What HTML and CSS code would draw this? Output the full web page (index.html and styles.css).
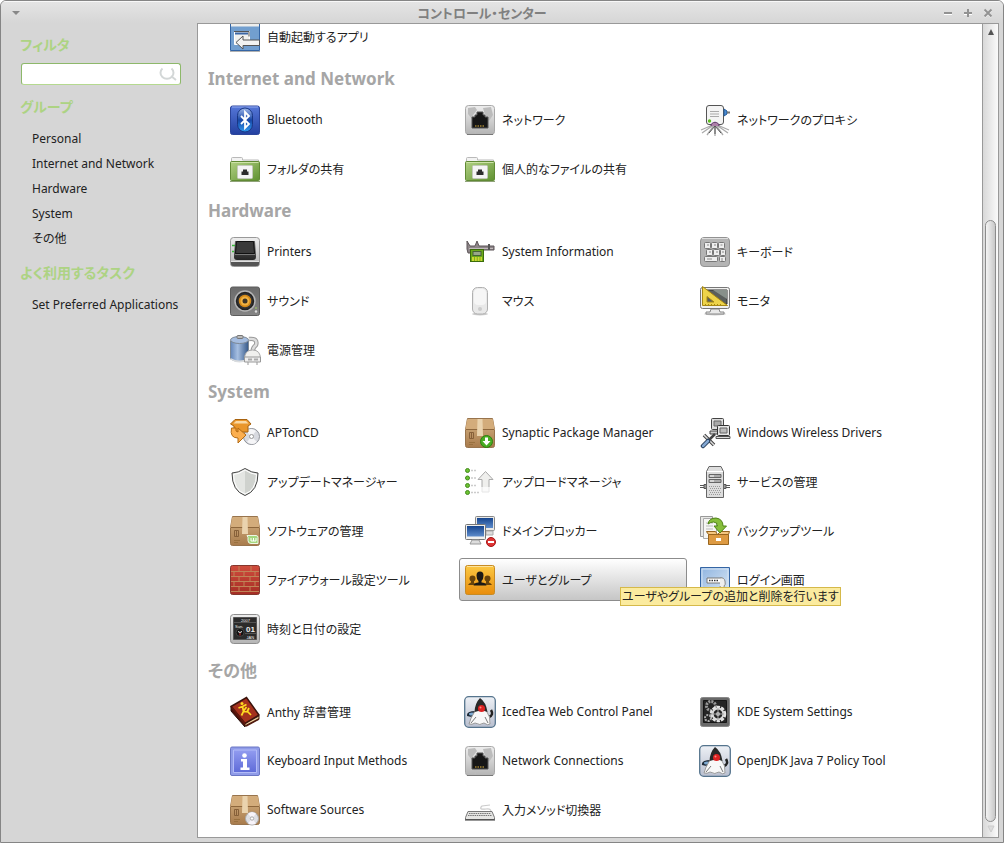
FILE: index.html
```html
<!DOCTYPE html>
<html lang="ja">
<head>
  <meta charset="UTF-8" />
  <meta name="viewport" content="width=device-width, initial-scale=1.0"/>
  <title>コントロール・センター</title>
  <link rel="stylesheet" href="styles.css">
</head>
<body>

  <!-- shared icons -->
  <svg class="sprite" aria-hidden="true">
    <defs>
      <linearGradient id="gSilver" x1="0" y1="0" x2="0" y2="1"><stop offset="0" stop-color="#eee"/><stop offset="1" stop-color="#b4b4b4"/></linearGradient>
      <linearGradient id="gBlue" x1="0" y1="0" x2="0" y2="1"><stop offset="0" stop-color="#5577d8"/><stop offset="1" stop-color="#2340a0"/></linearGradient>
      <linearGradient id="gPill" x1="0" y1="0" x2="0" y2="1"><stop offset="0" stop-color="#9fb7ea"/><stop offset=".5" stop-color="#1746a6"/><stop offset="1" stop-color="#2f9af0"/></linearGradient>
      <linearGradient id="gGreen" x1="0" y1="0" x2="1" y2="1"><stop offset="0" stop-color="#b2d184"/><stop offset="1" stop-color="#5f9130"/></linearGradient>
      <linearGradient id="gDark" x1="0" y1="0" x2="0" y2="1"><stop offset="0" stop-color="#686868"/><stop offset="1" stop-color="#242424"/></linearGradient>
      <linearGradient id="gGrey" x1="0" y1="0" x2="0" y2="1"><stop offset="0" stop-color="#6b6b6b"/><stop offset="1" stop-color="#858585"/></linearGradient>
      <linearGradient id="gBox" x1="0" y1="0" x2="0" y2="1"><stop offset="0" stop-color="#d6b384"/><stop offset="1" stop-color="#a87b4c"/></linearGradient>
      <linearGradient id="gTank" x1="0" y1="0" x2="1" y2="0"><stop offset="0" stop-color="#6285b9"/><stop offset=".4" stop-color="#a6bfe1"/><stop offset="1" stop-color="#355888"/></linearGradient>
      <linearGradient id="gOrange" x1="0" y1="0" x2="0" y2="1"><stop offset="0" stop-color="#fbc843"/><stop offset="1" stop-color="#e98d0c"/></linearGradient>
      <linearGradient id="gBrick" x1="0" y1="0" x2="0" y2="1"><stop offset="0" stop-color="#d04c3d"/><stop offset="1" stop-color="#a52d24"/></linearGradient>
      <linearGradient id="gScreen" x1="0" y1="0" x2="0" y2="1"><stop offset="0" stop-color="#16458e"/><stop offset="1" stop-color="#5e8ccb"/></linearGradient>
      <linearGradient id="gInfo" x1="0" y1="0" x2="0" y2="1"><stop offset="0" stop-color="#929cf0"/><stop offset="1" stop-color="#5e6bd8"/></linearGradient>
      <linearGradient id="gJava" x1="0" y1="0" x2="0" y2="1"><stop offset="0" stop-color="#edf0f5"/><stop offset="1" stop-color="#b9bfcf"/></linearGradient>
      <linearGradient id="gLogin" x1="0" y1="0" x2="1" y2="1"><stop offset="0" stop-color="#8fb4e0"/><stop offset="1" stop-color="#dbe8f5"/></linearGradient>
    </defs>

    <symbol id="startup" viewBox="0 0 32 32">
      <path d="M1.500 2h29v27.500h-29z" fill="#729fcf" stroke="#3465a4"/>
      <path d="M2 2h28v3.500H2z" fill="#eeeeec"/>
      <path d="M5.500 10.500h15v13h-15z" fill="#f1f1ee" stroke="#fff"/>
      <path d="M6 12.500h13" stroke="#3a67a5" stroke-width="2"/>
      <path d="M5 10.500h15v5" fill="none" stroke="#555"/>
      <path d="M7 21.500l7-6.500v4h16.500v5.500H14v3.500z" fill="#f3f3f1" stroke="#555"/>
      <path d="M1 30.500h30" stroke="#000" opacity=".3"/>
    </symbol>

    <symbol id="bluetooth" viewBox="0 0 32 32">
      <rect x="1.500" y="2" width="29" height="28.500" rx="2" fill="url(#gBlue)" stroke="#2c459b"/>
      <path d="M3 3h26" stroke="#92aaf0"/>
      <rect x="8.500" y="4" width="15" height="24" rx="7.500" fill="url(#gPill)" stroke="#183684"/>
      <path d="M12 12l8 8-4 4V8l4 4-8 8" fill="none" stroke="#fff" stroke-width="1.800"/>
    </symbol>

    <symbol id="network" viewBox="0 0 32 32">
      <rect x="1.500" y="1.500" width="29" height="29" rx="3" fill="url(#gSilver)" stroke="#a9a9a9"/>
      <path d="M4 4l7-1 2 3-4 5-1 4-4-5zM19 4l8-1 2 8-4 6-4-6zM10 24l3 1-2 5z" fill="#bcbcbc"/>
      <path d="M8 24V13h3v-2h2V8h6v3h2v2h3v11z" fill="#161616" stroke="#555"/>
      <path d="M11 22h10" stroke="#7d662a" stroke-width="2" stroke-dasharray="1.500 1"/>
      <path d="M3 30.500h26" stroke="#777"/>
    </symbol>

    <symbol id="proxy" viewBox="0 0 32 32">
      <path d="M16 20L3 29M16 20L8 31M16 20v12M16 20l8 11M16 20l13 9M16 20L2 26M16 20l14 6" stroke="#aaa" stroke-width="1.300"/>
      <rect x="7.500" y="1.500" width="17" height="19" rx="2.500" fill="#f4f4f4" stroke="#555"/>
      <path d="M11 7.500h9M11 10h9M11 12.500h9" stroke="#aaa"/>
      <path d="M25 5l3 2v3l-3 2z" fill="#4a8bd1" stroke="#245a98"/>
      <path d="M28 8.500h3" stroke="#777" stroke-width="2"/>
      <circle cx="10.500" cy="17" r="1.700" fill="#5fc020"/>
      <path d="M12 22c0-5 8-5 8 0" fill="#ad7fa8" stroke="#5c3566"/>
      <path d="M16 22l-6 7M16 22v8M16 22l6 7" stroke="#555"/>
    </symbol>

    <symbol id="share" viewBox="0 0 32 32">
      <path d="M2.500 9V5.500q0-1 1-1h9q1 0 1 1V7h16v3" fill="#f3f3f3" stroke="#b9b9b9"/>
      <rect x="1.500" y="8.500" width="29" height="19" rx="1" fill="url(#gGreen)" stroke="#608a34"/>
      <path d="M2.500 9.500h27" stroke="#cde3a8"/>
      <rect x="8.500" y="12.500" width="15" height="13" rx="1" fill="#f4f4f4" stroke="#c3c9bb"/>
      <path d="M12.500 22v-3.500h1.500v-2h4v2h1.500V22z" fill="#2c2c2c"/>
      <path d="M1 28.500h30" stroke="#45671f" opacity=".6"/>
    </symbol>

    <symbol id="printer" viewBox="0 0 32 32">
      <rect x="1.500" y="1.500" width="29" height="29" rx="3" fill="url(#gSilver)" stroke="#999"/>
      <path d="M2 25h28v3q0 2-2 2H4q-2 0-2-2z" fill="#555"/>
      <path d="M6 5h20l1 16q0 3-3 3H8q-3 0-3-3z" fill="url(#gDark)"/>
      <path d="M7.500 5.500h17l1 12h-19z" fill="#3a3a3a" stroke="#111"/>
      <path d="M6 18.500h20" stroke="#777"/>
      <path d="M3 9.500h3M3 15.500h2" stroke="#3cba3c" stroke-width="1.500"/>
      <path d="M2 25.500h28" stroke="#e1e1e1"/>
    </symbol>

    <symbol id="caliper" viewBox="0 0 32 32">
      <path d="M3 5l3 5h5l2-5 2 5h15v4H17l-3 3v8l-3-6-4-2H4l-1-4z" fill="#8d8588" stroke="#5d5558"/>
      <path d="M5 12.500h24" stroke="#c2bbbd"/>
      <path d="M25 8v6" stroke="#555" stroke-width="2"/>
      <rect x="6.500" y="13.500" width="13" height="12" fill="#6aa81b" stroke="#3b6c0a"/>
      <rect x="9" y="15.500" width="8" height="4" fill="#98a889" stroke="#47603a"/>
      <path d="M8 22h10M8 24h10" stroke="#ece63a" stroke-width="1.500" stroke-dasharray="2 .8"/>
    </symbol>

    <symbol id="keyboard" viewBox="0 0 32 32">
      <rect x="1.500" y="1.500" width="29" height="29" rx="3.500" fill="#b4b4b4" stroke="#929292"/>
      <path d="M3 2.500h26" stroke="#ddd"/>
      <g fill="#eee" stroke="#777">
        <rect x="5.500" y="6.500" width="6" height="6" rx="1"/><rect x="12.500" y="6.500" width="6" height="6" rx="1"/><rect x="19.500" y="6.500" width="6" height="6" rx="1"/>
        <rect x="7.500" y="13.500" width="6" height="6" rx="1"/><rect x="14.500" y="13.500" width="6" height="6" rx="1"/><rect x="21.500" y="13.500" width="5" height="6" rx="1"/>
        <rect x="5.500" y="20.500" width="13" height="5" rx="1"/><rect x="20.500" y="20.500" width="6" height="5" rx="1"/>
      </g>
      <path d="M8 9h2M15 9h2M21.500 9h2M10 16h2M17 16h2M23 16h2M8 23h5M23 22v3" stroke="#888"/>
    </symbol>

    <symbol id="sound" viewBox="0 0 32 32">
      <rect x="1.500" y="2" width="29" height="28.500" rx="2" fill="url(#gGrey)" stroke="#5d5d5d"/>
      <circle cx="16" cy="16" r="10" fill="#222" stroke="#b5b5b5" stroke-width="1.500"/>
      <circle cx="16" cy="16" r="7" fill="#d68b19" stroke="#333" stroke-width="1.500"/>
      <circle cx="16" cy="16" r="4.500" fill="#f1b241"/>
      <circle cx="16" cy="16" r="2.500" fill="#3c3426"/>
      <circle cx="27" cy="23" r=".8" fill="#a6e058"/><circle cx="27" cy="26.500" r="1.200" fill="#ddd"/>
    </symbol>

    <symbol id="mouse" viewBox="0 0 32 32">
      <ellipse cx="16" cy="29" rx="8" ry="1.500" fill="#ccc"/>
      <rect x="8.500" y="2.500" width="15" height="26.500" rx="5" fill="#e9e9e9" stroke="#b0b0b0"/>
      <rect x="10" y="4" width="12" height="16" rx="4" fill="#f6f6f6"/>
      <circle cx="16" cy="24" r="2" fill="#ccc"/>
    </symbol>

    <symbol id="monitor" viewBox="0 0 32 32">
      <ellipse cx="16" cy="29" rx="11" ry="1.500" fill="#ccc"/>
      <path d="M12 24h8l1 3h4v2H7v-2h4z" fill="#e8e8e8" stroke="#888"/>
      <rect x="1.500" y="2.500" width="29" height="21" rx="2" fill="#f0f0ee" stroke="#777"/>
      <path d="M4 5h24v14H4z" fill="#5a5f5c" stroke="#333"/>
      <path d="M14 5h14v9z" fill="#87908a"/>
      <path d="M3.500 1.500v19h25z M8 11.500l7 5.500H8z" fill="#edd34a" fill-rule="evenodd" stroke="#a78812"/>
      <path d="M6 19.500h18" stroke="#a78812" stroke-dasharray="1 2"/>
    </symbol>

    <symbol id="power" viewBox="0 0 32 32">
      <path d="M20 5q9-1 7 6-4 3-3 8" fill="none" stroke="#999" stroke-width="4.500"/>
      <path d="M20 5q9-1 7 6-4 3-3 8" fill="none" stroke="#ddd" stroke-width="2.500"/>
      <path d="M1.500 7v18q9 5 18 0V7z" fill="url(#gTank)" stroke="#7c8895"/>
      <ellipse cx="10.500" cy="6" rx="9" ry="3.500" fill="#a5bde0" stroke="#7c8895"/>
      <rect x="8" y="1.500" width="6" height="3" rx="1" fill="#bbb" stroke="#777"/>
      <path d="M1.500 24v1.500q9 6 18 0V24q-9 5-18 0z" fill="#d9dcdf"/>
      <path d="M15.500 25q0-9 8-9t8 9z" fill="#f0f0ee" stroke="#aaa"/>
      <path d="M15.500 23h16v5h-16zM19 28v3M28 28v3" fill="#eee" stroke="#999"/>
      <path d="M19 25.500h4M25 25.500h4" stroke="#aaa" stroke-width="2"/>
    </symbol>

    <symbol id="aptoncd" viewBox="0 0 32 32">
      <circle cx="22.500" cy="19.500" r="8" fill="#d7d9df" stroke="#8f9299"/>
      <path d="M22.500 19.500L17 14q5-4 10 0zM22.500 19.500L28 25q-5 4-10 0z" fill="#f5f5f7"/>
      <circle cx="22.500" cy="19.500" r="2" fill="#fff" stroke="#999"/>
      <path d="M1.500 7L6 2.500h12L22 7l-3 2v6H5V9z" fill="#e9962c" stroke="#a7620e"/>
      <path d="M4.500 6.500L7 4h10l2.500 2.500z" fill="#fad9a5"/>
      <path d="M2.500 11q-2 10 6.500 10v5l8-8-8-7v4q-3 0-2-4z" fill="#fbae4f" stroke="#b36b14"/>
    </symbol>

    <symbol id="package" viewBox="0 0 32 32">
      <path d="M3.500 1.500h25l2 11v16q0 2-2 2h-25q-2 0-2-2v-16z" fill="url(#gBox)" stroke="#98744d"/>
      <path d="M3 2.500h26l1.500 10h-29z" fill="#d3ac7b"/>
      <path d="M2 12.500h28" stroke="#8e673c"/>
      <path d="M13.500 2h5l.5 17h-6z" fill="#ead3ae"/>
      <path d="M5.500 15.500h4v6h-4zM7.500 16v5" fill="none" stroke="#876039"/>
      <path d="M5 25.500h6M5 27.500h4" stroke="#99713f"/>
    </symbol>

    <symbol id="wireless" viewBox="0 0 32 32">
      <rect x="12.500" y="1.500" width="12" height="11" rx="1" fill="#ddd" stroke="#444"/>
      <path d="M15 4h7v5h-7z" fill="#aaa" stroke="#666"/>
      <path d="M11 14h12v3H11z" fill="#ccc" stroke="#444"/>
      <rect x="18.500" y="8.500" width="12" height="10" rx="1" fill="#e5e5e5" stroke="#333"/>
      <path d="M21 11h7v5h-7z" fill="#bcbcbc" stroke="#666"/>
      <path d="M17 19.500h14v2H17z" fill="#ddd" stroke="#555"/>
      <path d="M5 18l10 10" stroke="#444" stroke-width="3.500"/><path d="M5 18l10 10" stroke="#ddd" stroke-width="1.500"/>
      <path d="M16 17L9 24" stroke="#444" stroke-width="2.500"/>
      <path d="M9 24l-5 5" stroke="#253b57" stroke-width="4.500" stroke-linecap="round"/><path d="M9 24l-5 5" stroke="#83a7d2" stroke-width="2.500" stroke-linecap="round"/>
    </symbol>

    <symbol id="shield" viewBox="0 0 32 32">
      <path d="M16 2.500q7 4.500 13 4.500 0 18-13 22.500Q3 25 3 7q6 0 13-4.500z" fill="#e4e6e3" stroke="#444"/>
      <path d="M16 4q6 4 11.500 4.500Q27 24 16 28z" fill="#cfd2ce"/>
      <path d="M16 4Q10 8 4.500 8.500 5 24 16 28 27 24 27.500 8.500 22 8 16 4z" fill="none" stroke="#fff"/>
    </symbol>

    <symbol id="upload" viewBox="0 0 32 32">
      <path d="M7 4.500h6M7 12h6M7 19.500h6M7 26.500h9" stroke="#ccc" stroke-width="1.500" stroke-dasharray="2 1"/>
      <g fill="#6cc332" stroke="#438b1c"><circle cx="3.500" cy="4.500" r="2"/><circle cx="3.500" cy="12" r="2"/><circle cx="3.500" cy="19.500" r="2"/><circle cx="3.500" cy="26.500" r="2"/></g>
      <path d="M21.500 5.500L29 13.500h-4V26h-7V13.500h-4z" fill="#efefed" stroke="#aaa"/>
      <path d="M15 21h13v7H15z" fill="#fff" opacity=".7"/>
    </symbol>

    <symbol id="service" viewBox="0 0 32 32">
      <path d="M1 19.500h30M1 21.500h30" stroke="#555"/>
      <path d="M5 18.500h22v4H5z" fill="#999" stroke="#555"/>
      <path d="M10 .5h12l2.500 5v26h-17v-26z" fill="#ddd" stroke="#666"/>
      <path d="M8 5.500h16" stroke="#fff"/>
      <path d="M10 8.500h12v3H10zM10 13.500h12v3H10z" fill="#aaa" stroke="#666"/>
      <path d="M11 10h4M11 15h4" stroke="#fff"/>
      <path d="M10 20.500h12M11 22.500h12M10 24.500h12M11 26.500h12M10 28.500h12" stroke="#999" stroke-dasharray="1 1"/>
    </symbol>

    <symbol id="domain" viewBox="0 0 32 32">
      <rect x="11.500" y="1.500" width="19" height="14" rx="1" fill="#e9e9e7" stroke="#888"/>
      <path d="M13 3h16v10H13z" fill="url(#gScreen)"/>
      <path d="M22 16h7v4h-7z" fill="#ddd" stroke="#aaa"/>
      <rect x="1.500" y="9.500" width="20" height="15" rx="1" fill="#f0f0ee" stroke="#777"/>
      <path d="M3 11h17v10.500H3z" fill="url(#gScreen)"/>
      <path d="M8 25h7l2 4H6z" fill="#ddd" stroke="#999"/>
      <circle cx="27" cy="27" r="4.500" fill="#df3434" stroke="#a31515"/>
      <path d="M24 27h6" stroke="#fff" stroke-width="2"/>
    </symbol>

    <symbol id="backup" viewBox="0 0 32 32">
      <path d="M1.500 1.500h12v20h-12z" fill="#e8e8e6" stroke="#999"/>
      <path d="M4.500 3.500h13v20h-13z" fill="#f6f6f4" stroke="#aaa"/>
      <path d="M7 8h7M7 11h7M7 14h7M7 17h5" stroke="#bbb"/>
      <path d="M9.500 19.500h20v10h-20z" fill="#dd9a42" stroke="#98651e"/>
      <path d="M9.500 19.500l-2-3h9l2 3 3-3h9l-1 3z" fill="#f4c681" stroke="#98651e"/>
      <path d="M17 23h5v3h-5z" fill="#fff"/>
      <path d="M9 9q1-6 8-6 7 1 7 8h3.500L21 18l-6-7h3.500q0-4-4-4-3 0-5.500 2z" fill="#86be3c" stroke="#4f8415"/>
    </symbol>

    <symbol id="firewall" viewBox="0 0 32 32">
      <rect x="1.500" y="1.500" width="29" height="29" rx="2" fill="url(#gBrick)" stroke="#84372d"/>
      <path d="M2 7.500h28M2 12.500h28M2 17.500h28M2 22.500h28M2 27.500h28M10 2v5.500M22 2v5.500M5 8v5M15 8v5M26 8v5M10 13v4.500M21 13v4.500M5 18v4.500M15 18v4.500M26 18v4.500M10 23v4.500M21 23v4.500" stroke="#bf8457"/>
    </symbol>

    <symbol id="users" viewBox="0 0 32 32">
      <rect x="1.500" y="1.500" width="29" height="29" rx="2" fill="url(#gOrange)" stroke="#c78b24"/>
      <path d="M3 2.500h26" stroke="#fde29b"/>
      <g fill="#69440b"><circle cx="8.500" cy="14.500" r="3"/><circle cx="23.500" cy="14.500" r="3"/><path d="M4 21q1-2 3-2.500V16h3v3l4 2zM18 21l4-2v-3h3v2.500q2 .5 3 2.500z"/></g>
      <path d="M12.500 11.500q0-4 3.500-4t3.500 4-2 5.500v1.500q4 0 5 3H9.500q1-3 5-3V17q-2-1.500-2-5.500z" fill="#1c1a17"/>
    </symbol>

    <symbol id="login" viewBox="0 0 32 32">
      <path d="M1.500 3.500h29v26h-29z" fill="url(#gLogin)" stroke="#3465a4"/>
      <path d="M3 5h26v23H3z" fill="none" stroke="#d5e4f4"/>
      <path d="M8 14h15v5H8z" fill="#fff" stroke="#777"/>
      <path d="M10 16.500h9" stroke="#333" stroke-width="1.500" stroke-dasharray="1.500 1"/>
      <path d="M21 14q4-1 5 3t-1 5l2 7h-4l-2-7" fill="#eee" stroke="#888"/>
    </symbol>

    <symbol id="clock" viewBox="0 0 32 32">
      <rect x="1.500" y="1.500" width="29" height="29" rx="3" fill="url(#gSilver)" stroke="#8e8e8e"/>
      <path d="M4.500 4.500h23v22h-23z" fill="#2b2b2b" stroke="#555"/>
      <path d="M5 9.500h22M16 20.500h11" stroke="#555"/>
      <circle cx="11" cy="19.500" r="4" fill="#111" stroke="#444"/>
      <path d="M9 18.500l2 1 2-1" stroke="#eee" fill="none"/><path d="M11 20v2.500" stroke="#d33"/>
      <text x="12" y="9" font-size="4">2007</text>
      <text x="6" y="15" font-size="4">Sun.</text>
      <text x="17" y="18.500" font-size="8" font-weight="bold">01</text>
      <text x="17.500" y="25.500" font-size="4">JAN</text>
    </symbol>

    <symbol id="book" viewBox="0 0 32 32">
      <path d="M2 11l14 17v3L2 15z" fill="#4d1009" stroke="#28110d"/>
      <path d="M16 27l14-7v3l-14 7z" fill="#e7c899" stroke="#46200d"/>
      <path d="M2 10.500L17.500 1.500 30 19l-14 8.500z" fill="#a4311d" stroke="#39130c" stroke-width="1.500"/>
      <path d="M3 11.500L16 28" stroke="#5f170d" stroke-width="2"/>
      <circle cx="13" cy="7.500" r="1.500" fill="#ffdc21"/>
      <path d="M9.500 12l4-1.500 4-2M13.500 10.500l1 5-2 4M14.500 15l3-4M15 15.500l4 .5 3 3M18 16l2-4" fill="none" stroke="#ffdc21" stroke-width="1.700"/>
      <path d="M17 30l13-7" stroke="#50190d" stroke-width="1.500"/>
    </symbol>

    <symbol id="java" viewBox="0 0 32 32">
      <rect x=".7" y=".7" width="30.600" height="30.600" rx="4" fill="url(#gJava)" stroke="#55748d" stroke-width="1.300"/>
      <path d="M3 20q-1-5 9-5l-2 6q-4 0-7-1z" fill="#1d2a38"/><ellipse cx="8" cy="18" rx="3" ry="1.500" fill="#7da9d1"/>
      <path d="M25 21q5-2 2-7" fill="none" stroke="#222" stroke-width="2.500"/>
      <path d="M11 15q-5 8-6 13 3 1 6-1 5 3 9 0 4 3 6 1 1-7-4-14z" fill="#f8f8f8" stroke="#999"/>
      <path d="M16 2q6 4 7.500 14-6-3-13 0Q11 7 16 2z" fill="#292929"/>
      <path d="M7 27l5-6M24 27l-3-6" stroke="#777"/>
      <circle cx="17.500" cy="12.500" r="3.500" fill="#dd2222"/><circle cx="16.500" cy="11.500" r="1" fill="#ff8a80"/>
    </symbol>

    <symbol id="kde" viewBox="0 0 32 32">
      <rect x="1.500" y="1.500" width="29" height="29" rx="2" fill="#686868" stroke="#888"/>
      <path d="M4.500 4.500h23v22h-23z" fill="#242424" stroke="#161616"/>
      <circle cx="12" cy="10" r="4.500" fill="none" stroke="#999" stroke-width="3" stroke-dasharray="2 1"/>
      <circle cx="19" cy="18" r="6.500" fill="none" stroke="#e4e4e4" stroke-width="3.500" stroke-dasharray="3 1.100"/>
      <circle cx="19" cy="18" r="5.500" fill="none" stroke="#dadada" stroke-width="2"/>
      <circle cx="19" cy="18" r="2" fill="#ccc"/><path d="M19 12v12M13 18h12" stroke="#aaa"/>
      <circle cx="9" cy="22" r="3" fill="none" stroke="#aaa" stroke-width="2" stroke-dasharray="2 1"/>
    </symbol>

    <symbol id="info" viewBox="0 0 32 32">
      <rect x="1.500" y="2" width="29" height="28.500" rx="1.500" fill="#8f9be8" stroke="#6a76c4"/>
      <path d="M4.500 5h23v22.500h-23z" fill="url(#gInfo)" stroke="#b2bbf7"/>
      <circle cx="15.500" cy="10.500" r="2.300" fill="#fff"/>
      <path d="M12 14h6v8.500h2.500V25h-9v-2.500H14v-6h-2z" fill="#fff"/>
    </symbol>

    <symbol id="disc" viewBox="0 0 32 32">
      <circle cx="23" cy="24.500" r="6.500" fill="#dedfe4" stroke="#aaa"/>
      <path d="M23 24.500l-4-5q4-3 8 0zM23 24.500l4 5q-4 2-8 0z" fill="#f8f4fa"/>
      <circle cx="23" cy="24.500" r="1.700" fill="#fff" stroke="#aaa"/>
    </symbol>

    <symbol id="ime" viewBox="0 0 32 32">
      <path d="M27 18q0-4-5-3-8 1-4-3l8-1" fill="none" stroke="#ccc" stroke-width="1.200"/>
      <path d="M4 17.500h24l2.500 6v2h-29v-2z" fill="#e5e5e3" stroke="#777"/>
      <path d="M5 19.500h22M4 21.500h24" stroke="#777" stroke-dasharray="1.500 .7"/>
      <path d="M1 26h30" stroke="#333"/>
    </symbol>
  </svg>

  <div class="window">
    <header class="titlebar">
      <button class="win-btn" aria-label="メニュー"><svg width="10" height="10" viewBox="0 0 10 10"><path d="M1 3h8L5 7z" fill="#888"/></svg></button>
      <h1>コントロール・センター</h1>
      <div class="win-controls">
        <button class="win-btn" aria-label="最小化"><svg width="10" height="10" viewBox="0 0 10 10"><path d="M1 6.500h8" stroke="#fff"/><path d="M1 5h8" stroke="#929292" stroke-width="2"/></svg></button>
        <button class="win-btn" aria-label="最大化"><svg width="10" height="10" viewBox="0 0 10 10"><path d="M1 6.500h8" stroke="#fff"/><path d="M1 5h8M5 1v8" stroke="#929292" stroke-width="2"/></svg></button>
        <button class="win-btn" aria-label="閉じる"><svg width="10" height="10" viewBox="0 0 10 10"><path d="M1.500 2l7 7M8.500 2l-7 7" stroke="#fff" stroke-width="2"/><path d="M1.500 1.500l7 7M8.500 1.500l-7 7" stroke="#929292" stroke-width="2"/></svg></button>
      </div>
    </header>

    <div class="body">
      <aside class="sidebar">
        <h2><label for="filter">フィルタ</label></h2>
        <div class="search">
          <input type="text" id="filter" />
          <svg width="20" height="18" viewBox="0 0 20 18"><path d="M4.500 3.500a6.500 6 0 1 0 9 0M13 11l5 4" fill="none" stroke="#d3d7d7" stroke-width="2"/></svg>
        </div>
        <h2>グループ</h2>
        <nav>
          <a href="#personal">Personal</a>
          <a href="#internet">Internet and Network</a>
          <a href="#hardware">Hardware</a>
          <a href="#system">System</a>
          <a href="#other">その他</a>
        </nav>
        <h2>よく利用するタスク</h2>
        <nav>
          <a href="#preferred">Set Preferred Applications</a>
        </nav>
      </aside>

      <main class="content">
        <div class="groups">
          <section class="grid" id="personal">
            <button class="item"><svg><use href="#startup"/></svg>自動起動するアプリ</button>
          </section>

          <h2 id="internet">Internet and Network</h2>
          <section class="grid">
            <button class="item"><svg><use href="#bluetooth"/></svg>Bluetooth</button>
            <button class="item"><svg><use href="#network"/></svg>ネットワーク</button>
            <button class="item"><svg><use href="#proxy"/></svg>ネットワークのプロキシ</button>
            <button class="item"><svg><use href="#share"/></svg>フォルダの共有</button>
            <button class="item"><svg><use href="#share"/></svg>個人的なファイルの共有</button>
          </section>

          <h2 id="hardware">Hardware</h2>
          <section class="grid">
            <button class="item"><svg><use href="#printer"/></svg>Printers</button>
            <button class="item"><svg><use href="#caliper"/></svg>System Information</button>
            <button class="item"><svg><use href="#keyboard"/></svg>キーボード</button>
            <button class="item"><svg><use href="#sound"/></svg>サウンド</button>
            <button class="item"><svg><use href="#mouse"/></svg>マウス</button>
            <button class="item"><svg><use href="#monitor"/></svg>モニタ</button>
            <button class="item"><svg><use href="#power"/></svg>電源管理</button>
          </section>

          <h2 id="system">System</h2>
          <section class="grid">
            <button class="item"><svg><use href="#aptoncd"/></svg>APTonCD</button>
            <button class="item"><svg viewBox="0 0 32 32"><use href="#package"/><circle cx="22.500" cy="24.500" r="6" fill="#48ad22" stroke="#2c8110"/><path d="M21 20.500h3V24h2.500l-4 4.500-4-4.500H21z" fill="#fff"/></svg>Synaptic Package Manager</button>
            <button class="item"><svg><use href="#wireless"/></svg>Windows Wireless Drivers</button>
            <button class="item"><svg><use href="#shield"/></svg>アップデートマネージャー</button>
            <button class="item"><svg><use href="#upload"/></svg>アップロードマネージャ</button>
            <button class="item"><svg><use href="#service"/></svg>サービスの管理</button>
            <button class="item"><svg viewBox="0 0 32 32"><use href="#package"/><path d="M18 20.500h9q2 0 2 2v6h-7q-3 0-3-3v-3z" fill="#a5d77e" stroke="#eef8e5"/><path d="M22 23v3h5v-3M24.500 23v3" fill="none" stroke="#fff"/></svg>ソフトウェアの管理</button>
            <button class="item"><svg><use href="#domain"/></svg>ドメインブロッカー</button>
            <button class="item"><svg><use href="#backup"/></svg>バックアップツール</button>
            <button class="item"><svg><use href="#firewall"/></svg>ファイアウォール設定ツール</button>
            <button class="item active" aria-describedby="tip"><svg><use href="#users"/></svg>ユーザとグループ<span class="tooltip" role="tooltip" id="tip">ユーザやグループの追加と削除を行います</span></button>
            <button class="item"><svg><use href="#login"/></svg>ログイン画面</button>
            <button class="item"><svg><use href="#clock"/></svg>時刻と日付の設定</button>
          </section>

          <h2 id="other">その他</h2>
          <section class="grid">
            <button class="item"><svg><use href="#book"/></svg>Anthy 辞書管理</button>
            <button class="item"><svg><use href="#java"/></svg>IcedTea Web Control Panel</button>
            <button class="item"><svg><use href="#kde"/></svg>KDE System Settings</button>
            <button class="item"><svg><use href="#info"/></svg>Keyboard Input Methods</button>
            <button class="item"><svg><use href="#network"/></svg>Network Connections</button>
            <button class="item"><svg><use href="#java"/></svg>OpenJDK Java 7 Policy Tool</button>
            <button class="item"><svg viewBox="0 0 32 32"><use href="#package"/><use href="#disc"/></svg>Software Sources</button>
            <button class="item"><svg><use href="#ime"/></svg>入力メソッド切換器</button>
          </section>
        </div>

        <div class="scrollbar">
          <svg width="8" height="8" viewBox="0 0 8 8"><path d="M1 7h6L4 1z" fill="#555"/></svg>
          <div class="track"><div class="thumb"></div></div>
          <svg width="8" height="8" viewBox="0 0 8 8"><path d="M1 1h6L4 7z" fill="#ddd" stroke="#ccc"/></svg>
        </div>
      </main>
    </div>
  </div>

</body>
</html>
```
FILE: styles.css
```css
* {
  box-sizing: border-box;
}

body {
  margin: 0;
  height: 100vh;
  overflow: hidden;
  font-family: "Noto Sans", "Noto Sans CJK JP", sans-serif;
  font-size: 12px;
  font-feature-settings: "palt";
  color: #222;
  background: #fff;
}

.sprite {
  position: absolute;
  width: 0;
  height: 0;
}

symbol text {
  font-family: "Liberation Sans", sans-serif;
  fill: #eee;
}

.window {
  display: flex;
  flex-direction: column;
  height: 100%;
  border: 1px solid #858585;
  border-radius: 6px 6px 0 0;
  background: #d6d6d6;
  overflow: hidden;
}

.titlebar {
  display: flex;
  align-items: center;
  flex: none;
  height: 22px;
  padding: 0 10px;
  border-top: 1px solid #f8f8f8;
  background: linear-gradient(#e4e4e4, #d6d6d6);
}

.titlebar h1 {
  flex: 1;
  margin: 0;
  font-size: 13px;
  line-height: 20px;
  text-align: center;
  color: #808080;
}

.win-btn {
  display: flex;
  padding: 0;
  border: none;
  background: none;
}

.win-controls {
  display: flex;
  gap: 10px;
}

.body {
  display: flex;
  flex: 1;
  min-height: 0;
  padding: 0 4px 4px 0;
}

.sidebar {
  flex: none;
  width: 196px;
  padding: 12px 15px 0 19px;
}

.sidebar h2 {
  margin: 0;
  font-size: 14px;
  line-height: 20px;
  white-space: nowrap;
  color: #add383;
}

.search {
  display: flex;
  align-items: center;
  height: 22px;
  margin: 8px 1px 12px;
  padding-right: 2px;
  border: 1px solid #8db86a;
  border-bottom-color: #b5d98f;
  border-radius: 3px;
  background: #fff;
}

.search input {
  flex: 1;
  min-width: 0;
  border: none;
  outline: none;
  background: none;
}

.sidebar nav {
  display: flex;
  flex-direction: column;
  padding: 9px 0 12px 12px;
}

.sidebar a {
  line-height: 25px;
  color: #222;
  text-decoration: none;
  white-space: nowrap;
}

.content {
  display: flex;
  flex: 1;
  min-width: 0;
  border: 1px solid #999;
  background: #fff;
}

/* the list is scrolled to its end */
.groups {
  display: flex;
  flex: 1;
  flex-direction: column;
  justify-content: flex-end;
  min-width: 0;
  padding: 0 0 6px 26px;
  overflow: hidden;
}

.groups h2 {
  flex: none;
  margin: 0 0 0 -16px;
  padding-top: 2px;
  font-size: 17px;
  line-height: 38px;
  color: #a6a6a6;
}

.grid {
  display: grid;
  flex: none;
  grid-template-columns: repeat(auto-fill, 228px);
  gap: 6px 7px;
}

.item {
  position: relative;
  display: flex;
  align-items: center;
  gap: 6px;
  height: 43px;
  padding: 0 4px;
  border: 1px solid transparent;
  border-radius: 3px;
  background: none;
  color: #222;
  font: inherit;
  font-feature-settings: inherit;
  white-space: nowrap;
}

.item > svg {
  flex: none;
  width: 32px;
  height: 32px;
}

.item.active {
  z-index: 1;
  border-color: #8c8c8c;
  background: linear-gradient(#fff, #c6c6c6);
}

.tooltip {
  position: absolute;
  top: 28px;
  left: 160px;
  padding: 0 1px;
  border: 1px solid #d5b94a;
  background: #fbeb9f;
  line-height: 17px;
}

.scrollbar {
  display: flex;
  flex: none;
  flex-direction: column;
  align-items: center;
  width: 16px;
  padding: 4px 1px;
  border-left: 1px solid #999;
  background: linear-gradient(90deg, #d8d8d8, #fafafa);
}

.track {
  display: flex;
  flex: 1;
  flex-direction: column;
  justify-content: flex-end;
  width: 100%;
  padding: 4px 1px 3px;
}

.thumb {
  height: 77%;
  border: 1px solid #8c8c8c;
  border-radius: 6px;
  background: linear-gradient(90deg, #f4f4f4, #c8c8c8);
}
```
